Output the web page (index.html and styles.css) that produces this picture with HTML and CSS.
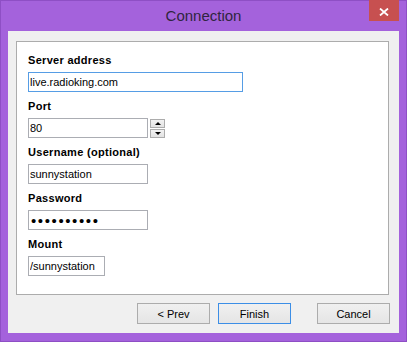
FILE: index.html
```html
<!DOCTYPE html>
<html lang="en">
<head>
    <meta charset="UTF-8">
    <title>Connection</title>
    <link rel="stylesheet" href="styles.css">
</head>
<body>
    <div class="window">
        <div class="titlebar">Connection</div>
        <button class="close-btn" title="Close">
            <svg width="10" height="8" viewBox="0 0 10 8">
                <path d="M1 0.5 L9 7.5 M9 0.5 L1 7.5" stroke="#fff" stroke-width="1.8" fill="none"/>
            </svg>
        </button>

        <div class="client">
            <div class="panel">
                <div class="field">
                    <label for="server">Server address</label>
                    <input type="text" id="server" class="input input-wide focused" value="live.radioking.com">
                </div>
                <div class="field">
                    <label for="port">Port</label>
                    <div class="port-row">
                        <input type="text" id="port" class="input input-mid" value="80">
                        <div class="spinner">
                            <span class="spin-btn"><i class="arrow-up"></i></span>
                            <span class="spin-btn"><i class="arrow-down"></i></span>
                        </div>
                    </div>
                </div>
                <div class="field">
                    <label for="user">Username (optional)</label>
                    <input type="text" id="user" class="input input-mid" value="sunnystation">
                </div>
                <div class="field">
                    <label for="pass">Password</label>
                    <input type="password" id="pass" class="input input-mid password" value="sunnystati">
                </div>
                <div class="field">
                    <label for="mount">Mount</label>
                    <input type="text" id="mount" class="input input-short" value="/sunnystation">
                </div>
            </div>

            <div class="actions">
                <button class="btn btn-prev">&lt; Prev</button>
                <button class="btn btn-default">Finish</button>
                <button class="btn">Cancel</button>
            </div>
        </div>
    </div>
</body>
</html>
```

FILE: styles.css
```css
body {
    margin: 0;
    font-family: "Liberation Sans", Arial, sans-serif;
    background: #fff;
}
.window {
    position: relative;
    width: 407px;
    height: 342px;
    box-sizing: border-box;
    border: 1px solid #8e4fc5;
    background: #a462dc;
    display: flex;
    flex-direction: column;
}
.titlebar {
    height: 30px;
    display: flex;
    align-items: center;
    justify-content: center;
    font-size: 15px;
    color: #2f2540;
    padding-bottom: 1px;
    box-sizing: border-box;
}
.close-btn {
    position: absolute;
    top: -1px;
    right: 7px;
    width: 30px;
    height: 21px;
    border: none;
    padding: 0;
    background: #c75050;
    display: flex;
    align-items: center;
    justify-content: center;
    padding-top: 2px;
}
.client {
    flex: 1;
    margin: 0 7px 8px;
    background: #f0f0f0;
    display: flex;
    flex-direction: column;
}
.panel {
    margin: 10px 10px 0 8px;
    height: 254px;
    box-sizing: border-box;
    border: 1px solid #acacac;
    background: #fff;
    padding: 11px 11px 0;
}
.field + .field {
    margin-top: 7px;
}
.field label {
    display: block;
    font-weight: bold;
    font-size: 11px;
    line-height: 14px;
    letter-spacing: 0.3px;
    color: #000;
    margin-bottom: 5px;
}
.input {
    display: block;
    height: 20px;
    box-sizing: border-box;
    border: 1px solid #abadb3;
    padding: 0 2px 0 1px;
    margin: 0;
    font-family: "Liberation Sans", Arial, sans-serif;
    font-size: 11px;
    color: #000;
    background: #fff;
    outline: none;
}
.input.focused {
    border-color: #569de5;
}
.input-wide {
    width: 215px;
}
.input-mid {
    width: 120px;
}
.input-short {
    width: 77px;
}
.password {
    font-size: 15px;
    letter-spacing: 1.6px;
    padding-left: 2px;
}
.port-row {
    display: flex;
    align-items: flex-start;
}
.spinner {
    display: flex;
    flex-direction: column;
    gap: 1px;
    margin-left: 2px;
    margin-top: 1px;
}
.spin-btn {
    width: 15px;
    height: 9px;
    box-sizing: border-box;
    border: 1px solid #acacac;
    background: linear-gradient(#f2f2f2, #e3e3e3);
    display: flex;
    align-items: center;
    justify-content: center;
}
.arrow-up, .arrow-down {
    width: 0;
    height: 0;
    border-left: 3px solid transparent;
    border-right: 3px solid transparent;
}
.arrow-up {
    border-bottom: 3px solid #000;
}
.arrow-down {
    border-top: 3px solid #000;
}
.actions {
    display: flex;
    justify-content: flex-end;
    margin-top: 8px;
    padding-right: 9px;
}
.btn {
    width: 73px;
    height: 21px;
    box-sizing: border-box;
    border: 1px solid #acacac;
    background: linear-gradient(#f0f0f0, #e5e5e5);
    font-family: "Liberation Sans", Arial, sans-serif;
    font-size: 11px;
    color: #000;
    padding: 0;
}
.btn-prev {
    margin-right: 8px;
}
.btn-default {
    border-color: #3c8ee6;
    margin-right: 26px;
}
```
